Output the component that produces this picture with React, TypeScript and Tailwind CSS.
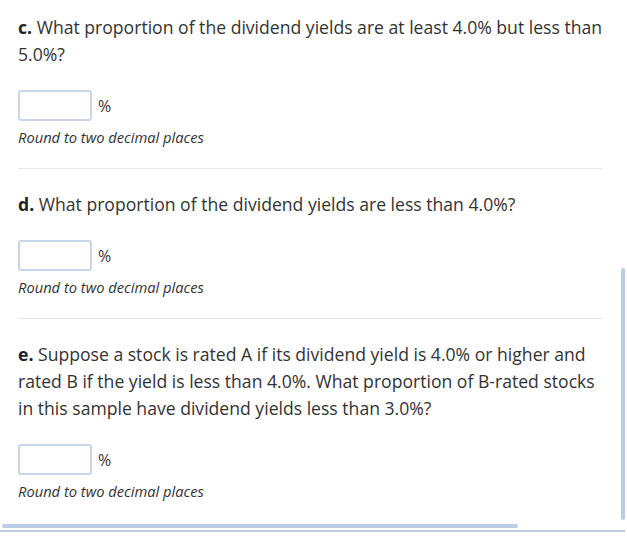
const questions = [
  {
    label: "c.",
    text: "What proportion of the dividend yields are at least 4.0% but less than 5.0%?",
  },
  {
    label: "d.",
    text: "What proportion of the dividend yields are less than 4.0%?",
  },
  {
    label: "e.",
    text: "Suppose a stock is rated A if its dividend yield is 4.0% or higher and rated B if the yield is less than 4.0%. What proportion of B-rated stocks in this sample have dividend yields less than 3.0%?",
  },
];

export default function App() {
  return (
    <div
      className="w-[627px] h-[536px] bg-white overflow-hidden text-[#333] flex flex-col"
      style={{ fontFamily: '"Open Sans", sans-serif' }}
    >
      <div className="flex flex-1 min-h-0">
        {/* QUESTIONS */}
        <div className="flex-1 pl-[18px] pr-[19px] pt-[14px]">
          {questions.map((q, i) => (
            <div
              key={q.label}
              className={`pb-[21px] ${
                i < questions.length - 1 ? "border-b border-[#e6e6e6] mb-[22px]" : ""
              }`}
            >
              <p className="text-[17.6px] leading-[27px] -mr-[12px]">
                <span className="font-bold text-[#222]">{q.label}</span> {q.text}
              </p>

              <div className="flex items-center gap-[6px] mt-[22px]">
                <input
                  type="text"
                  className="w-[74px] h-[31px] rounded-[3px] border-2 border-[#c7d6ea] outline-none px-2"
                />
                <span className="text-[16px]">%</span>
              </div>

              <p className="mt-[6px] text-[14.7px] leading-[20px] italic">
                Round to two decimal places
              </p>
            </div>
          ))}
        </div>

        {/* VERTICAL SCROLLBAR */}
        <div className="w-[5px] mr-[1px] pt-[268px] pb-[4px] flex flex-col">
          <div className="flex-1 w-[4px] rounded-sm bg-[#b9cde6]" />
        </div>
      </div>

      {/* HORIZONTAL SCROLLBAR */}
      <div className="h-[12px] flex flex-col gap-[2px]">
        <div className="ml-[2px] w-[516px] h-[4px] rounded-sm bg-[#b9cde6]" />
        <div className="w-[625px] h-[2px] bg-[#b9cde6]" />
      </div>
    </div>
  );
}
